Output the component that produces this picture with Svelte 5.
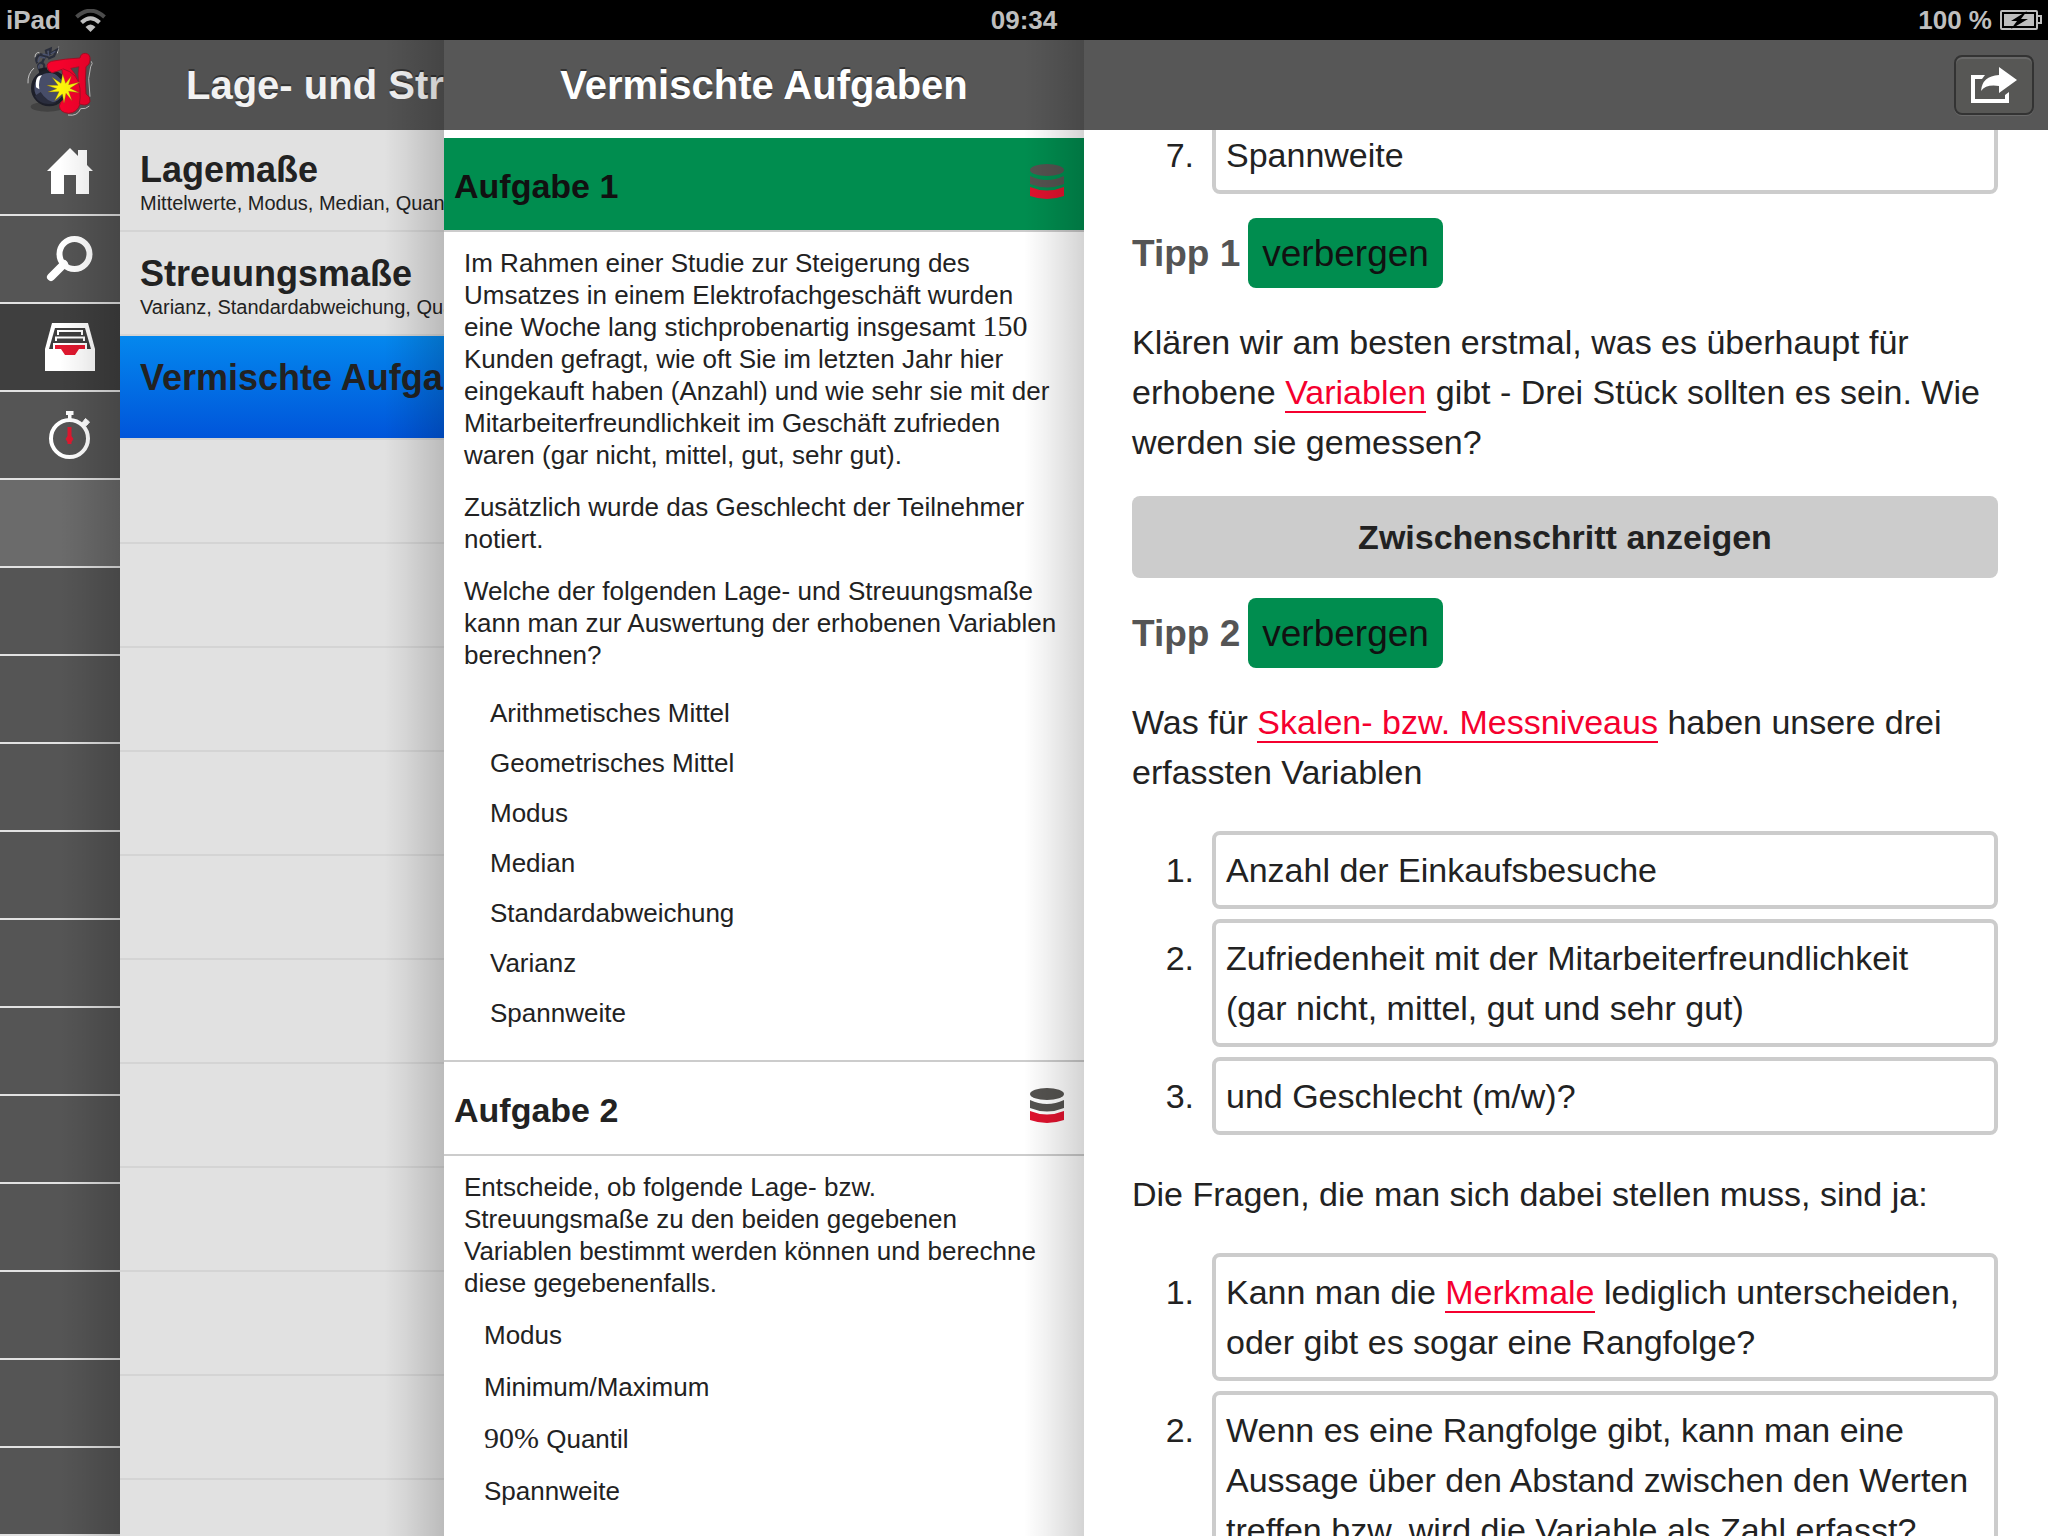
<script>
  const topics = [
    { title: 'Lagemaße', sub: 'Mittelwerte, Modus, Median, Quantile' },
    { title: 'Streuungsmaße', sub: 'Varianz, Standardabweichung, Quartilsabstand' },
    { title: 'Vermischte Aufgaben', sub: '' }
  ];

  const measures = [
    'Arithmetisches Mittel',
    'Geometrisches Mittel',
    'Modus',
    'Median',
    'Standardabweichung',
    'Varianz',
    'Spannweite'
  ];

  let activeTopic = 2;
  let activeTask = 1;
</script>

{#snippet stack()}
  <svg class="stack" viewBox="0 0 34 35" aria-hidden="true">
    <ellipse cx="17" cy="6" rx="17" ry="6" fill="#555350" />
    <path d="M0 12 Q17 20 34 12 V20 Q17 27 0 20 Z" fill="#555350" />
    <path d="M0 23 Q17 30 34 23 V32 Q17 38 0 32 Z" fill="#e0122e" />
  </svg>
{/snippet}

<div class="app">
  <div class="status">
    <div class="status-left">
      <span>iPad</span>
      <svg width="31" height="23" viewBox="0 0 31 23" aria-hidden="true">
        <path d="M1.500 8 Q15.500 -4.500 29.500 8" fill="none" stroke="#4c4c4c" stroke-width="4" />
        <path d="M6.500 13.500 Q15.500 5 24.500 13.500" fill="none" stroke="#bebebe" stroke-width="4" />
        <path d="M10.500 18 Q15.500 13 20.500 18 L15.500 23 Z" fill="#bebebe" />
      </svg>
    </div>
    <span class="clock">09:34</span>
    <div class="status-right">
      <span>100 %</span>
      <svg width="42" height="20" viewBox="0 0 42 20" aria-hidden="true">
        <rect x="1" y="1" width="36" height="18" rx="1" fill="none" stroke="#bebebe" stroke-width="2" />
        <path d="M38 6 H41 V13 H38" fill="none" stroke="#bebebe" stroke-width="2" />
        <rect x="4" y="4" width="30" height="12" fill="#bebebe" />
        <path d="M27 1 L11 11 H17 L11 19 L28 9 H21 Z" fill="#000" />
      </svg>
    </div>
  </div>

  <div class="panels">
    <nav class="sidebar shade">
      <div class="logo">
        <svg width="70" height="72" viewBox="75 135 210 216" aria-hidden="true">
          <path d="M84 250 Q82 222 102 204 M105 172 Q106 156 118 158 M176 140 L172 160 M274 184 Q280 190 272 200 L266 236 L270 290 M268 318 Q258 328 242 326 Q232 350 204 345" fill="none" stroke="#c4c4c4" stroke-width="3" />
          <ellipse cx="142" cy="320" rx="50" ry="15" fill="#424242" />
          <path d="M122 214 Q106 196 124 188 Q138 192 130 208 M112 190 Q104 176 116 166 L134 172 L126 188 M120 162 L142 170 L138 152 L152 146 L150 162 L170 150 L162 168 L144 176" fill="none" stroke="#2a2e3b" stroke-width="7" />
          <path d="M122 212 Q110 198 122 192 M114 186 L120 170 L136 174 M128 162 L146 166 L144 152 M152 162 L166 154" fill="none" stroke="#4b536f" stroke-width="4" />
          <path d="M116 206 L140 202 L144 220 L118 224 Z" fill="#1b1c24" />
          <circle cx="148" cy="264" r="50" fill="#474d68" stroke="#1d1f29" stroke-width="10" />
          <path d="M104 288 Q124 322 170 308 Q140 306 122 276 Z" fill="#2a2d3d" />
          <path d="M150 214 Q170 212 188 226 L192 250 Q176 226 150 214 Z" fill="#1d1f29" />
          <path d="M108 262 Q104 226 126 226 Q114 240 118 268 Z" fill="#fff" />
          <path d="M142 202 Q138 190 154 184 Q196 176 240 174 Q242 160 256 160 Q272 162 270 180 Q270 194 258 200 Q254 240 258 282 Q272 290 270 304 Q264 318 246 314 L240 312 Q232 338 206 340 Q180 338 178 318 Q180 304 194 296 Q190 250 186 208 Q168 216 156 218 Q144 214 142 202 Z" fill="#f5022c" stroke="#a80e26" stroke-width="3" />
          <path d="M212 205 L237 200 Q232 222 236 244 Q226 220 212 205 Z" fill="#4c4c4c" stroke="#a80e26" stroke-width="2" />
          <path d="M188 206 Q236 220 240 266 Q242 298 238 312" fill="none" stroke="#a80e26" stroke-width="3" />
          <path d="M188 222 L197 250 L214 228 L206 254 L240 246 L210 265 L238 278 L206 274 L216 302 L198 280 L192 310 L187 282 L164 302 L177 275 L144 276 L170 266 L140 256 L174 256 L156 232 L183 250 Z" fill="#fdf60a" stroke="#7b5a1c" stroke-width="1" />
        </svg>
      </div>
      <button class="cell first" aria-label="Start">
        <svg width="60" height="60" viewBox="0 0 60 60">
          <path d="M30 6 L38 14 V8 H47 V23 L53 29 H49 V52 H36 V33 H24 V52 H11 V29 H7 Z" fill="#fff" />
        </svg>
      </button>
      <button class="cell" aria-label="Suche">
        <svg width="60" height="60" viewBox="0 0 60 60">
          <circle cx="34.500" cy="25" r="15" fill="none" stroke="#fff" stroke-width="6" />
          <path d="M11 48 L24 35" stroke="#fff" stroke-width="8" stroke-linecap="round" />
        </svg>
      </button>
      <button class="cell active" aria-label="Aufgaben">
        <svg width="60" height="60" viewBox="0 0 60 60">
          <path d="M12 6 H48 L55 32 V54 H5 V32 Z" fill="#fff" />
          <path d="M15 11 H45 L51 32 H9 Z" fill="#3f3f3f" />
          <path d="M18 18 V14 H42 V18 M16 24 V20.500 H44 V24" fill="none" stroke="#fff" stroke-width="2" />
          <path d="M13 26 H47 V33 H41 L36 40 H24 L19 33 H13 Z" fill="#fff" />
          <path d="M15 28 H45 V32 H39 L35 38 H25 L21 32 H15 Z" fill="#e0182f" />
        </svg>
      </button>
      <button class="cell" aria-label="Timer">
        <svg width="60" height="60" viewBox="0 0 60 60">
          <circle cx="29.500" cy="33.500" r="18.500" fill="none" stroke="#fff" stroke-width="4" />
          <path d="M26 6 H33.500 V10 H31.500 V15 H28 V10 H26 Z" fill="#fff" />
          <path d="M45.500 13.500 L49.500 17 L46.500 20.500 L44 21 L42 18 Z" fill="#fff" stroke="#fff" />
          <path d="M27.500 22 H31.500 V31 L33.500 34 L31.500 37 V39 H27.500 V37 L25.500 34 L27.500 31 Z" fill="#e0182f" />
        </svg>
      </button>
      <div class="cell light"></div>
      {#each Array(11) as _}
        <div class="cell"></div>
      {/each}
    </nav>

    <section class="topics shade">
      <header class="bar bar-left"><h1>Lage- und Streuungsmaße</h1></header>
      <ul class="topic-list">
        {#each topics as topic, i}
          <li>
            <button class="topic" class:topic-active={activeTopic === i} on:click={() => activeTopic = i}>
              <span class="topic-title">{topic.title}</span>
              <span class="topic-sub">{topic.sub}</span>
            </button>
          </li>
        {/each}
        {#each Array(11) as _}
          <li class="topic-empty"></li>
        {/each}
      </ul>
    </section>

    <section class="tasks shade">
      <header class="bar"><h1>Vermischte Aufgaben</h1></header>

      <button class="task-head task-first" class:task-active={activeTask === 1} on:click={() => activeTask = 1}>
        <span>Aufgabe 1</span>
        {@render stack()}
      </button>
      <div class="task-body">
        <p>
          Im Rahmen einer Studie zur Steigerung des Umsatzes in einem Elektrofachgeschäft wurden eine Woche lang
          stichprobenartig insgesamt <span class="math">150</span> Kunden gefragt, wie oft Sie im letzten Jahr hier
          eingekauft haben (Anzahl) und wie sehr sie mit der Mitarbeiterfreundlichkeit im Geschäft zufrieden waren
          (gar nicht, mittel, gut, sehr gut).
        </p>
        <p>Zusätzlich wurde das Geschlecht der Teilnehmer notiert.</p>
        <p>
          Welche der folgenden Lage- und Streuungsmaße kann man zur Auswertung der erhobenen Variablen berechnen?
        </p>
        <ul class="measures">
          {#each measures as measure}
            <li>{measure}</li>
          {/each}
        </ul>
      </div>

      <button class="task-head" class:task-active={activeTask === 2} on:click={() => activeTask = 2}>
        <span>Aufgabe 2</span>
        {@render stack()}
      </button>
      <div class="task-body">
        <p>
          Entscheide, ob folgende Lage- bzw. Streuungsmaße zu den beiden gegebenen Variablen bestimmt werden können
          und berechne diese gegebenenfalls.
        </p>
        <ul class="values">
          <li>Modus</li>
          <li>Minimum/Maximum</li>
          <li><span class="math">90%</span> Quantil</li>
          <li>Spannweite</li>
        </ul>
      </div>
    </section>

    <main class="solution">
      <header class="bar bar-right">
        <button class="share" aria-label="Teilen">
          <svg width="46" height="36" viewBox="0 0 46 36">
            <path d="M14 8 H0 V36 H38 V25 L34 28 V32 H4 V12 H11 Z" fill="#fff" />
            <path d="M28 0 L46 13 L28 26 V19 Q15 17 10 24 Q11 9 28 8 Z" fill="#fff" />
          </svg>
        </button>
      </header>
      <div class="content">
        <ol class="boxes boxes-cut">
          <li><span class="num">7.</span><div class="box">Spannweite</div></li>
        </ol>

        <div class="tip">
          <h2>Tipp 1</h2>
          <button class="toggle">verbergen</button>
        </div>
        <p>
          Klären wir am besten erstmal, was es überhaupt für erhobene <a href="#variablen">Variablen</a> gibt - Drei
          Stück sollten es sein. Wie werden sie gemessen?
        </p>
        <button class="step">Zwischenschritt anzeigen</button>

        <div class="tip">
          <h2>Tipp 2</h2>
          <button class="toggle">verbergen</button>
        </div>
        <p>
          Was für <a href="#skalen">Skalen- bzw. Messniveaus</a> haben unsere drei erfassten Variablen
        </p>
        <ol class="boxes">
          <li><span class="num">1.</span><div class="box">Anzahl der Einkaufsbesuche</div></li>
          <li>
            <span class="num">2.</span>
            <div class="box">Zufriedenheit mit der Mitarbeiterfreundlichkeit (gar nicht, mittel, gut und sehr gut)</div>
          </li>
          <li><span class="num">3.</span><div class="box">und Geschlecht (m/w)?</div></li>
        </ol>
        <p class="lead">Die Fragen, die man sich dabei stellen muss, sind ja:</p>
        <ol class="boxes">
          <li>
            <span class="num">1.</span>
            <div class="box">
              Kann man die <a href="#merkmale">Merkmale</a> lediglich unterscheiden, oder gibt es sogar eine
              Rangfolge?
            </div>
          </li>
          <li>
            <span class="num">2.</span>
            <div class="box">
              Wenn es eine Rangfolge gibt, kann man eine Aussage über den Abstand zwischen den Werten treffen bzw.
              wird die Variable als Zahl erfasst?
            </div>
          </li>
        </ol>
      </div>
    </main>
  </div>
</div>

<style>
  :global(body) {
    margin: 0;
    background: #000;
  }

  .app {
    display: flex;
    flex-direction: column;
    height: 100vh;
    overflow: hidden;
    font-family: "Liberation Sans", Arial, Helvetica, sans-serif;
    color: #222;
  }

  .app * {
    box-sizing: border-box;
  }

  h1, h2, p, ul, ol {
    margin: 0;
    padding: 0;
  }

  ul, ol {
    list-style: none;
  }

  button {
    font: inherit;
    color: inherit;
    border: 0;
    margin: 0;
    padding: 0;
    cursor: pointer;
  }

  /* status bar */
  .status {
    display: grid;
    grid-template-columns: 1fr auto 1fr;
    align-items: center;
    flex: 0 0 40px;
    padding: 0 6px;
    background: #000;
    color: #bebebe;
    font-size: 26px;
    font-weight: bold;
    line-height: 40px;
  }

  .status-left,
  .status-right {
    display: flex;
    align-items: center;
    gap: 14px;
  }

  .status-right {
    justify-content: flex-end;
    gap: 8px;
  }

  /* panels */
  .panels {
    display: grid;
    grid-template-columns: 120px minmax(0, 324fr) minmax(0, 640fr) minmax(0, 964fr);
    flex: 1;
    min-height: 0;
  }

  .sidebar,
  .topics,
  .tasks,
  .solution {
    position: relative;
    overflow: hidden;
    display: flex;
    flex-direction: column;
  }

  .sidebar > *,
  .topics > *,
  .tasks > *,
  .solution > * {
    flex-shrink: 0;
  }

  .shade::after {
    content: "";
    position: absolute;
    z-index: 2;
    top: 0;
    right: 0;
    bottom: 0;
    width: 60px;
    background: linear-gradient(to right, rgba(0, 0, 0, 0), rgba(0, 0, 0, 0.05) 35%, rgba(0, 0, 0, 0.17));
    pointer-events: none;
  }

  .bar {
    display: flex;
    align-items: center;
    justify-content: center;
    height: 90px;
    background: #575757;
  }

  .bar h1 {
    font-size: 40px;
    line-height: 48px;
    color: #fff;
    white-space: nowrap;
    text-shadow: 0 -2px 0 #333;
  }

  .bar-left {
    z-index: 1;
    justify-content: flex-start;
    padding-left: 66px;
    background: #525252;
  }

  .bar-left h1 {
    color: #f2f2f2;
  }

  .bar-right {
    justify-content: flex-end;
    padding-right: 14px;
  }

  /* sidebar */
  .sidebar {
    background: #555;
  }

  .logo {
    display: flex;
    height: 90px;
    padding: 5px 25px;
  }

  .cell {
    display: flex;
    align-items: center;
    justify-content: flex-end;
    height: 88px;
    padding-right: 20px;
    background: #555;
    border-bottom: 2px solid #e2e2e2;
  }

  .first {
    height: 86px;
  }

  .active {
    background: #3f3f3f;
  }

  .light {
    background: #6b6b6b;
  }

  /* topics */
  .topics {
    background: #e1e1e1;
  }

  .topic-list {
    margin-top: -2px;
  }

  .topic-list li {
    height: 104px;
    border-bottom: 2px solid #d4d4d4;
  }

  .topic {
    display: flex;
    flex-direction: column;
    width: 100%;
    height: 100%;
    padding: 21px 0 0 20px;
    background: none;
    text-align: left;
    white-space: nowrap;
  }

  .topic-title {
    font-size: 36px;
    font-weight: bold;
    line-height: 42px;
  }

  .topic-sub {
    font-size: 20px;
    line-height: 24px;
  }

  .topic-active {
    background: linear-gradient(#0488ee, #0055da);
  }

  /* tasks */
  .tasks {
    background: #fff;
  }

  .task-head {
    display: flex;
    align-items: center;
    justify-content: space-between;
    height: 94px;
    padding: 4px 20px 0 10px;
    background: none;
    border-bottom: 2px solid #ccc;
    font-size: 34px;
    font-weight: bold;
  }

  .task-first {
    margin-top: 8px;
  }

  .task-active {
    background: #008d4f;
    color: #111;
  }

  .stack {
    width: 34px;
    height: 35px;
    margin-bottom: 10px;
  }

  .task-body {
    padding: 15px 20px 22px;
    font-size: 26px;
    line-height: 32px;
  }

  .task-body + .task-head {
    border-top: 2px solid #ccc;
    height: 96px;
  }

  .task-body p + p {
    margin-top: 20px;
  }

  .math {
    font-family: "Liberation Serif", "Times New Roman", serif;
    font-size: 30px;
    line-height: 30px;
  }

  .measures {
    margin-top: 17px;
    padding-left: 26px;
    line-height: 50px;
  }

  .values {
    margin-top: 10px;
    padding-left: 20px;
    line-height: 52px;
  }

  /* solution */
  .solution {
    background: #fff;
  }

  .share {
    display: flex;
    align-items: center;
    justify-content: center;
    width: 80px;
    height: 60px;
    background: #575755;
    border: 2px solid #333;
    border-radius: 8px;
    box-shadow: inset 0 2px 0 #686868, 0 1px 0 #6a6a6a;
  }

  .content {
    overflow: hidden;
    flex: 1;
    padding: 0 50px 0 48px;
    font-size: 34px;
    line-height: 50px;
  }

  .boxes {
    display: flex;
    flex-direction: column;
    gap: 10px;
    margin-top: 34px;
  }

  .boxes-cut {
    margin-top: -14px;
  }

  .boxes li {
    display: grid;
    grid-template-columns: 62px 1fr;
    column-gap: 18px;
  }

  .num {
    padding-top: 14px;
    text-align: right;
  }

  .box {
    padding: 10px 20px 10px 10px;
    border: 4px solid #ccc;
    border-radius: 8px;
  }

  .tip {
    display: flex;
    align-items: baseline;
    gap: 8px;
    margin: 20px 0 29px;
  }

  .boxes + .tip {
    margin-top: 24px;
  }

  .tip h2 {
    font-size: 37px;
    line-height: 50px;
    color: #555;
  }

  .toggle {
    padding: 11px 14px 9px;
    background: #008d4f;
    border-radius: 8px;
    color: #111;
    font-size: 37px;
    line-height: 50px;
  }

  .content a {
    color: #f5002f;
    text-decoration: none;
    border-bottom: 2px solid #f5002f;
  }

  .step {
    width: 100%;
    margin-top: 29px;
    padding: 16px;
    background: #ccc;
    border-radius: 8px;
    font-weight: bold;
    line-height: 50px;
  }

  .lead {
    margin-top: 34px;
  }
</style>
